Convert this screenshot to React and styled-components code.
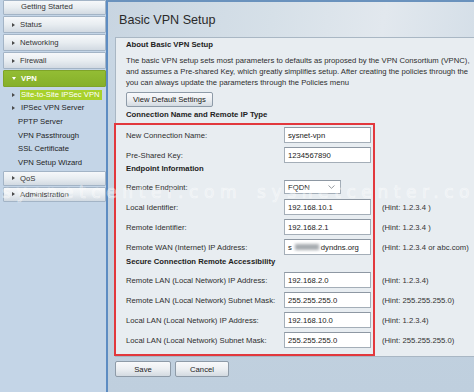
import React from 'react';
import styled, { createGlobalStyle } from 'styled-components';

const Global = createGlobalStyle`
  html, body { margin: 0; padding: 0; background: #c4d5e7; }
  body { width: 474px; height: 392px; overflow: hidden; }
`;

const Page = styled.div`
  position: relative;
  display: flex;
  width: 474px;
  height: 392px;
  overflow: hidden;
  font-family: "Liberation Sans", Arial, sans-serif;
  font-size: 7.7px;
  color: #2b2b2b;
`;

const Sidebar = styled.nav`
  flex: none;
  width: 106px;
  box-sizing: border-box;
  padding-left: 3px;
  background: #c4d5e7;
  display: flex;
  flex-direction: column;
`;

const MenuItem = styled.div`
  height: ${p => p.$h || 17}px;
  margin-bottom: 1px;
  box-sizing: border-box;
  display: flex;
  align-items: ${p => (p.$bottom ? 'flex-end' : 'center')};
  padding-left: ${p => (p.$plain ? 17 : 8)}px;
  padding-bottom: ${p => (p.$bottom ? 3 : 0)}px;
  gap: 5px;
  border: 1px solid ${p => (p.$active ? '#7fa429' : '#a3b4c6')};
  border-radius: 1px;
  background: ${p =>
    p.$active
      ? 'linear-gradient(#93bd34, #86b02a)'
      : 'linear-gradient(#f6f8fa 0%, #e8edf1 50%, #d2dae2 100%)'};
  color: ${p => (p.$active ? '#ffffff' : '#333')};
  font-weight: ${p => (p.$active ? 'bold' : 'normal')};
`;

const ArrowRight = styled.span`
  width: 0;
  height: 0;
  flex: none;
  border-left: 3px solid ${p => p.$color || '#4a4a4a'};
  border-top: 2.5px solid transparent;
  border-bottom: 2.5px solid transparent;
`;

const ArrowDown = styled.span`
  width: 0;
  height: 0;
  flex: none;
  border-top: 3px solid #ffffff;
  border-left: 2.5px solid transparent;
  border-right: 2.5px solid transparent;
`;

const SubList = styled.div`
  display: flex;
  flex-direction: column;
  margin-bottom: 1px;
`;

const SubItem = styled.div`
  height: 13.6px;
  display: flex;
  align-items: center;
  gap: 5px;
  padding-left: ${p => (p.$arrow ? 9 : 14)}px;
  color: #1e1e1e;
`;

const SubLabel = styled.span`
  padding: 1px 1px;
  line-height: 8px;
  background: ${p => (p.$selected ? '#a8d12c' : 'transparent')};
  color: ${p => (p.$selected ? '#ffffff' : '#1e1e1e')};
  padding-right: ${p => (p.$selected ? 2 : 1)}px;
`;

const Main = styled.main`
  flex: 1;
  min-width: 0;
  overflow: hidden;
  border-left: 2px solid #5d8cc2;
  border-top: 2px solid #6a92bd;
  background: linear-gradient(#c9d7e4, #bfcfde);
  display: flex;
  flex-direction: column;
`;

const Header = styled.header`
  height: 35px;
  box-sizing: border-box;
  padding-left: 11px;
  display: flex;
  align-items: center;
  background: linear-gradient(100deg, #c8d5e1 0%, #d6e0e8 45%, #e2e8ee 75%, #d5dfe8 100%);
`;

const Title = styled.h1`
  margin: 0;
  font-size: 12.6px;
  font-weight: normal;
  color: #2a2a2a;
`;

const Card = styled.section`
  width: 420px;
  flex: none;
  margin-left: 7px;
  box-sizing: border-box;
  border: 1px solid #a9b7c4;
  background: #e8edf1;
  padding: 0 0 1px 10px;
`;

const SectionTitle = styled.h2`
  margin: ${p => (p.$first ? '0' : '1px 0 0')};
  font-size: 7.75px;
  font-weight: bold;
  line-height: 14px;
  color: #222;
`;

const Para = styled.p`
  margin: 3px 0 0;
  line-height: 11px;
  white-space: nowrap;
  color: #2e2e2e;
`;

const Button = styled.button`
  height: ${p => p.$h || 15}px;
  width: ${p => (p.$w ? `${p.$w}px` : 'auto')};
  padding: 0 6px;
  margin: 0;
  box-sizing: border-box;
  font-family: "Liberation Sans", Arial, sans-serif;
  font-size: 7.7px;
  color: #222;
  border: 1px solid #8e9ba8;
  border-radius: 2px;
  background: linear-gradient(#f8f9fb 0%, #eceff2 50%, #d3dae1 100%);
  display: flex;
  align-items: center;
  justify-content: center;
`;

const TopButton = styled(Button)`
  margin-top: 4px;
  width: 87px;
`;

const Form = styled.div`
  position: relative;
  padding: 3px 0 5px;
  display: flex;
  flex-direction: column;
`;

const Highlight = styled.div`
  position: absolute;
  left: -12px;
  top: 1px;
  width: 261px;
  bottom: -1px;
  box-sizing: border-box;
  border: 2px solid #e2383d;
  pointer-events: none;
`;

const Row = styled.div`
  display: grid;
  grid-template-columns: 158px 87px auto;
  align-items: center;
  height: 20px;
`;

const Label = styled.span`
  color: #2e2e2e;
  white-space: nowrap;
`;

const FieldHeading = styled.div`
  height: 12px;
  line-height: 12px;
  margin: ${p => p.$m || '-2px 0 2px'};
  font-weight: bold;
  color: #222;
`;

const TextBox = styled.div`
  height: 16px;
  box-sizing: border-box;
  border: 1px solid #a4aeb8;
  border-top-color: #8e98a3;
  background: #ffffff;
  padding-left: 3px;
  display: flex;
  align-items: center;
  color: #222;
  white-space: nowrap;
  overflow: hidden;
`;

const SelectBox = styled(TextBox)`
  width: 57px;
  height: 14px;
  justify-content: space-between;
  padding-right: 5px;
`;

const Blur = styled.span`
  display: inline-block;
  width: 24px;
  height: 6px;
  margin: 0 2px 0 3px;
  background: #8f959b;
  filter: blur(1.6px);
  opacity: 0.8;
`;

const Hint = styled.span`
  margin-left: 11px;
  color: #333;
  white-space: nowrap;
`;

const Actions = styled.div`
  display: flex;
  gap: 4px;
  padding: 4px 0 0 7px;
`;

const Watermark = styled.div`
  position: absolute;
  left: 2px;
  top: 182px;
  white-space: nowrap;
  font-family: "DejaVu Sans", sans-serif;
  font-size: 17px;
  letter-spacing: 5.6px;
  color: rgba(255, 255, 255, 0.18);
  -webkit-text-stroke: 0.7px rgba(255, 255, 255, 0.5);
  pointer-events: none;
  word-spacing: 4px;
`;

const Chevron = () => (
  <svg width="7" height="4" viewBox="0 0 7 4">
    <path d="M0.5 0.5 L3.5 3.3 L6.5 0.5" fill="none" stroke="#8a8f95" strokeWidth="0.9" />
  </svg>
);

const topMenu = ['Status', 'Networking', 'Firewall'];
const subMenu = [
  { label: 'Site-to-Site IPSec VPN', arrow: true, selected: true },
  { label: 'IPSec VPN Server', arrow: true },
  { label: 'PPTP Server' },
  { label: 'VPN Passthrough' },
  { label: 'SSL Certificate' },
  { label: 'VPN Setup Wizard' },
];

const Field = ({ label, children, hint }) => (
  <Row>
    <Label>{label}</Label>
    {children}
    <Hint>{hint}</Hint>
  </Row>
);

export default function App() {
  return (
    <>
      <Global />
      <Page>
        <Sidebar>
          <MenuItem $plain $bottom $h={15}>Getting Started</MenuItem>
          {topMenu.map(m => (
            <MenuItem key={m}>
              <ArrowRight />
              {m}
            </MenuItem>
          ))}
          <MenuItem $active>
            <ArrowDown />
            VPN
          </MenuItem>
          <SubList>
            {subMenu.map(s => (
              <SubItem key={s.label} $arrow={s.arrow}>
                {s.arrow && <ArrowRight />}
                <SubLabel $selected={s.selected}>{s.label}</SubLabel>
              </SubItem>
            ))}
          </SubList>
          <MenuItem $h={15}>
            <ArrowRight />
            QoS
          </MenuItem>
          <MenuItem $h={15}>
            <ArrowRight />
            Administration
          </MenuItem>
        </Sidebar>
        <Main>
          <Header>
            <Title>Basic VPN Setup</Title>
          </Header>
          <Card>
            <SectionTitle $first>About Basic VPN Setup</SectionTitle>
            <Para>
              The basic VPN setup sets most parameters to defaults as proposed by the VPN Consortium (VPNC),
              <br />
              and assumes a Pre-shared Key, which greatly simplifies setup. After creating the policies through the
              <br />
              you can always update the parameters through the Policies menu
            </Para>
            <TopButton>View Default Settings</TopButton>
            <SectionTitle>Connection Name and Remote IP Type</SectionTitle>
            <Form>
              <Field label="New Connection Name:">
                <TextBox>sysnet-vpn</TextBox>
              </Field>
              <Field label="Pre-Shared Key:">
                <TextBox>1234567890</TextBox>
              </Field>
              <FieldHeading>Endpoint Information</FieldHeading>
              <Field label="Remote Endpoint:">
                <SelectBox>
                  FQDN
                  <Chevron />
                </SelectBox>
              </Field>
              <Field label="Local Identifier:" hint="(Hint: 1.2.3.4 )">
                <TextBox>192.168.10.1</TextBox>
              </Field>
              <Field label="Remote Identifier:" hint="(Hint: 1.2.3.4 )">
                <TextBox>192.168.2.1</TextBox>
              </Field>
              <Field label="Remote WAN (Internet) IP Address:" hint="(Hint: 1.2.3.4 or abc.com)">
                <TextBox>
                  s<Blur />dyndns.org
                </TextBox>
              </Field>
              <FieldHeading $m="-1px 0 2px">Secure Connection Remote Accessibility</FieldHeading>
              <Field label="Remote LAN (Local Network) IP Address:" hint="(Hint: 1.2.3.4)">
                <TextBox>192.168.2.0</TextBox>
              </Field>
              <Field label="Remote LAN (Local Network) Subnet Mask:" hint="(Hint: 255.255.255.0)">
                <TextBox>255.255.255.0</TextBox>
              </Field>
              <Field label="Local LAN (Local Network) IP Address:" hint="(Hint: 1.2.3.4)">
                <TextBox>192.168.10.0</TextBox>
              </Field>
              <Field label="Local LAN (Local Network) Subnet Mask:" hint="(Hint: 255.255.255.0)">
                <TextBox>255.255.255.0</TextBox>
              </Field>
              <Highlight />
            </Form>
          </Card>
          <Actions>
            <Button $w={56} $h={16}>Save</Button>
            <Button $w={54} $h={16}>Cancel</Button>
          </Actions>
        </Main>
        <Watermark>sysnetcenter.com sysnetcenter.com sysnetcenter.com</Watermark>
      </Page>
    </>
  );
}
